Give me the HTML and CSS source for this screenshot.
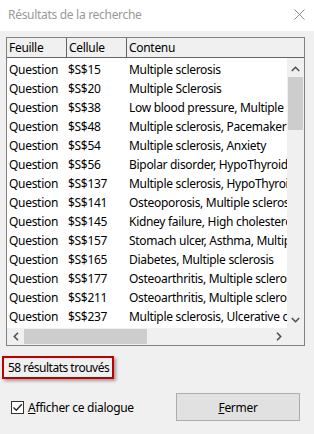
FILE: index.html
```html
<!DOCTYPE html>
<html lang="fr">
<head>
  <meta charset="UTF-8">
  <title>Résultats de la recherche</title>
  <link rel="stylesheet" href="styles.css">
</head>
<body>
  <div class="titlebar">
    <span class="title">Résultats de la recherche</span>
    <svg class="close" width="11" height="11" viewBox="0 0 11 11"><path d="M0.5 0.5 L10.5 10.5 M10.5 0.5 L0.5 10.5" stroke="#8a8a8a" stroke-width="1" fill="none"/></svg>
  </div>

  <div class="list">
    <div class="head">
      <div class="hcell">Feuille</div>
      <div class="hcell">Cellule</div>
      <div class="hcell last">Contenu</div>
    </div>
    <div class="middle">
      <div class="rows">
        <div class="row"><span>Question</span><span>$S$15</span><span>Multiple sclerosis</span></div>
        <div class="row"><span>Question</span><span>$S$20</span><span>Multiple Sclerosis</span></div>
        <div class="row"><span>Question</span><span>$S$38</span><span>Low blood pressure, Multiple sclerosis</span></div>
        <div class="row"><span>Question</span><span>$S$48</span><span>Multiple sclerosis, Pacemaker</span></div>
        <div class="row"><span>Question</span><span>$S$54</span><span>Multiple sclerosis, Anxiety</span></div>
        <div class="row"><span>Question</span><span>$S$56</span><span>Bipolar disorder, HypoThyroid, Multiple sclerosis</span></div>
        <div class="row"><span>Question</span><span>$S$137</span><span>Multiple sclerosis, HypoThyroid</span></div>
        <div class="row"><span>Question</span><span>$S$141</span><span>Osteoporosis, Multiple sclerosis</span></div>
        <div class="row"><span>Question</span><span>$S$145</span><span>Kidney failure, High cholesterol</span></div>
        <div class="row"><span>Question</span><span>$S$157</span><span>Stomach ulcer, Asthma, Multiple sclerosis</span></div>
        <div class="row"><span>Question</span><span>$S$165</span><span>Diabetes, Multiple sclerosis</span></div>
        <div class="row"><span>Question</span><span>$S$177</span><span>Osteoarthritis, Multiple sclerosis</span></div>
        <div class="row"><span>Question</span><span>$S$211</span><span>Osteoarthritis, Multiple sclerosis</span></div>
        <div class="row"><span>Question</span><span>$S$237</span><span>Multiple sclerosis, Ulcerative colitis</span></div>
      </div>
      <div class="vscroll">
        <div class="arrow"><svg width="9" height="6" viewBox="0 0 9 6"><path d="M0.8 5 L4.5 1.3 L8.2 5" stroke="#505050" stroke-width="1.6" fill="none"/></svg></div>
        <div class="vthumb"></div>
        <div class="vtrack"></div>
        <div class="arrow"><svg width="9" height="6" viewBox="0 0 9 6"><path d="M0.8 1 L4.5 4.7 L8.2 1" stroke="#505050" stroke-width="1.6" fill="none"/></svg></div>
      </div>
    </div>
    <div class="hscroll">
      <div class="arrow"><svg width="6" height="9" viewBox="0 0 6 9"><path d="M5 0.8 L1.3 4.5 L5 8.2" stroke="#505050" stroke-width="1.6" fill="none"/></svg></div>
      <div class="hthumb"></div>
      <div class="htrack"></div>
      <div class="arrow"><svg width="6" height="9" viewBox="0 0 6 9"><path d="M1 0.8 L4.7 4.5 L1 8.2" stroke="#505050" stroke-width="1.6" fill="none"/></svg></div>
      <div class="corner"></div>
    </div>
  </div>

  <div class="status">58 résultats trouvés</div>

  <div class="footer">
    <label class="check">
      <span class="box"><svg width="11" height="11" viewBox="0 0 11 11"><path d="M1.5 5.5 L4.3 8.3 L9.8 2.3" stroke="#202020" stroke-width="1.3" fill="none"/></svg></span>
      <span><u>A</u>fficher ce dialogue</span>
    </label>
    <button class="btn"><u>F</u>ermer</button>
  </div>
</body>
</html>
```

FILE: styles.css
```css
body {
  margin: 0;
  width: 314px;
  height: 434px;
  background-color: #f0f0f0;
  font-family: "Noto Sans", sans-serif;
  font-size: 12px;
  letter-spacing: -0.3px;
  color: #000;
  overflow: hidden;
}

.titlebar {
  height: 31px;
  background-color: #fff;
  display: flex;
  align-items: center;
  padding: 0 8px;
  justify-content: space-between;
}

.title {
  color: #999;
  margin-top: -3px;
}

.close {
  margin-right: 1px;
  margin-top: -3px;
}

.list {
  margin: 6px 9px 0 6px;
  border: 1px solid #828282;
  background-color: #fff;
}

.head {
  display: grid;
  grid-template-columns: 60px 60px 1fr;
  height: 19px;
  background-color: #f0f0f0;
  border-bottom: 1px solid #646464;
}

.hcell {
  border-right: 1px solid #646464;
  padding-left: 2px;
  line-height: 19px;
}

.hcell.last {
  border-right: none;
}

.middle {
  display: flex;
  height: 270px;
}

.rows {
  flex: 1;
  padding-top: 3px;
  overflow: hidden;
}

.row {
  display: grid;
  grid-template-columns: 60px 60px 1fr;
  height: 19px;
  line-height: 18px;
  white-space: nowrap;
}

.row span {
  padding-left: 2px;
  overflow: hidden;
}

.row span:nth-child(2) {
  padding-left: 1px;
}

.vscroll {
  width: 17px;
  display: flex;
  flex-direction: column;
  background-color: #f0f0f0;
}

.arrow {
  width: 17px;
  height: 17px;
  display: flex;
  align-items: center;
  justify-content: center;
  flex-shrink: 0;
}

.vscroll .arrow:first-child {
  margin-top: 2px;
}

.vthumb {
  height: 53px;
  margin: 0 1px;
  background-color: #cdcdcd;
}

.vtrack {
  flex: 1;
}

.hscroll {
  display: flex;
  height: 17px;
  background-color: #f0f0f0;
}

.hthumb {
  width: 123px;
  margin: 1px 0;
  background-color: #cdcdcd;
}

.htrack {
  flex: 1;
}

.corner {
  width: 17px;
}

.status {
  display: inline-block;
  margin: 10px 0 0 2px;
  padding: 0 3px 0 4px;
  height: 19px;
  line-height: 19px;
  letter-spacing: -0.5px;
  border: 2px solid #c00000;
  box-shadow: 2px 2px 3px rgba(0, 0, 0, 0.35);
}

.footer {
  display: flex;
  align-items: center;
  margin-top: 14px;
  padding: 0 14px 0 11px;
}

.check {
  display: flex;
  align-items: center;
  gap: 4px;
}

.box {
  width: 11px;
  height: 11px;
  border: 1px solid #333;
  background-color: #fff;
  display: flex;
}

.btn {
  margin-left: auto;
  width: 124px;
  height: 28px;
  border: 1px solid #adadad;
  background-color: #e1e1e1;
  font-family: "Noto Sans", sans-serif;
  font-size: 12px;
  letter-spacing: -0.3px;
  color: #000;
  padding: 0;
}
```
